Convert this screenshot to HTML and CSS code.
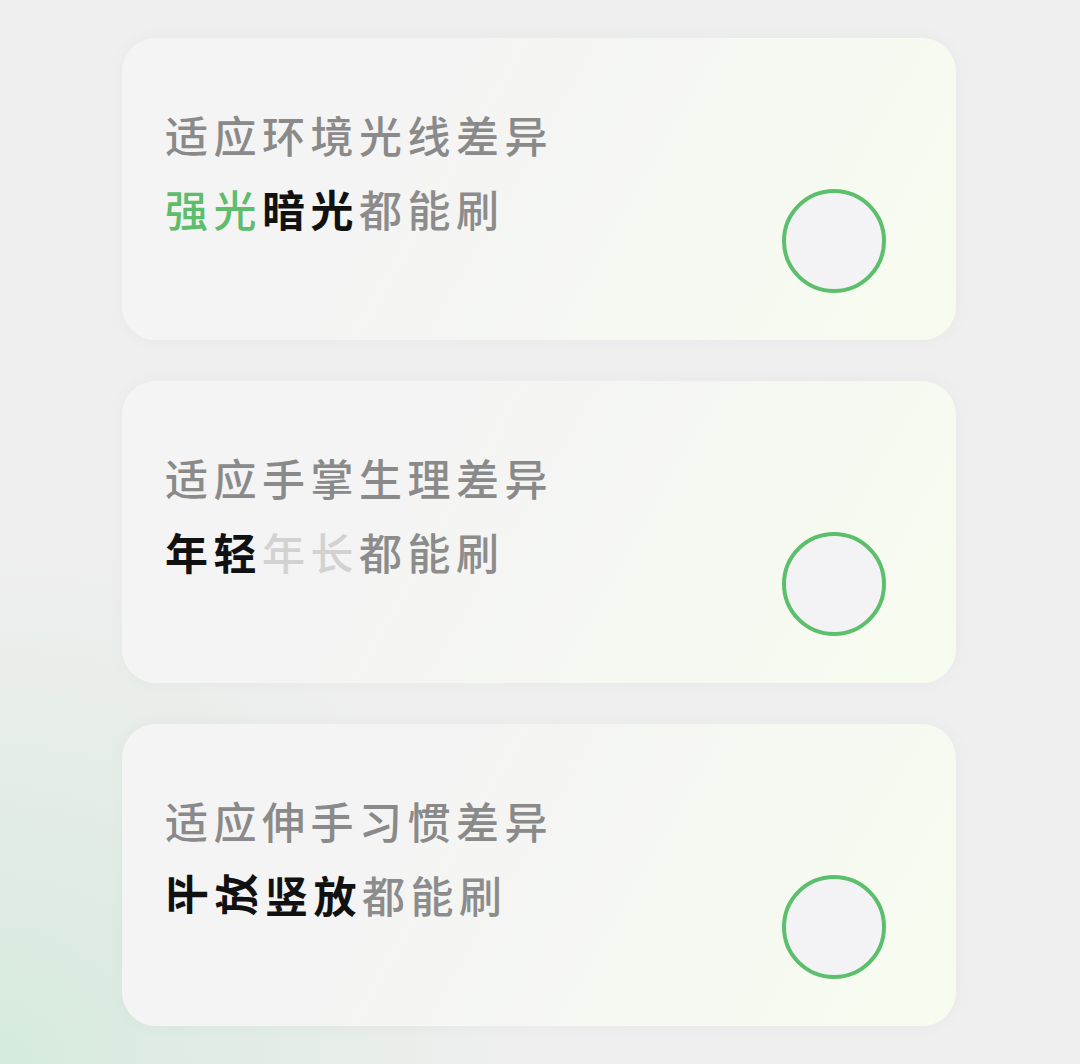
FILE: index.html
```html
<!DOCTYPE html>
<html lang="zh-CN">
<head>
    <meta charset="UTF-8">
    <title>刷掌适应</title>
    <link rel="stylesheet" href="styles.css">
</head>
<body>
 <main class="list">

    <div class="card">
        <div class="text">
            <p class="title">适应环境光线差异</p>
            <p class="line"><span class="green">强光</span><span class="black">暗光</span><span class="gray">都能刷</span></p>
        </div>
        <div class="ring"></div>
    </div>

    <div class="card">
        <div class="text">
            <p class="title">适应手掌生理差异</p>
            <p class="line"><span class="black">年轻</span><span class="light">年长</span><span class="gray">都能刷</span></p>
        </div>
        <div class="ring"></div>
    </div>

    <div class="card">
        <div class="text">
            <p class="title">适应伸手习惯差异</p>
            <p class="line"><span class="black"><span class="turn">平</span><span class="turn">放</span>竖放</span><span class="gray">都能刷</span></p>
        </div>
        <div class="ring"></div>
    </div>

 </main>
</body>
</html>
```

FILE: styles.css
```css
*{
    margin: 0;
    padding: 0;
    box-sizing: border-box;
}

body{
    width: 1080px;
    height: 1064px;
    overflow: hidden;
    background-color: #efefef;
    background-image: radial-gradient(ellipse 520px 520px at 0 1064px, rgba(214, 234, 221, 1), rgba(239, 239, 239, 0));
    font-family: "Noto Sans CJK SC", "Noto Sans", sans-serif;
}

.list{
    display: flex;
    flex-direction: column;
    gap: 41px;
    padding: 38px 0 0 122px;
}

.card{
    width: 834px;
    height: 302px;
    border-radius: 34px;
    background: linear-gradient(120deg, #f4f4f4 35%, #f7fcef 100%);
    box-shadow: 0 0 18px rgba(0, 0, 0, 0.035);
    display: flex;
    justify-content: space-between;
    align-items: flex-end;
    padding: 59px 70px 47px 43px;
}

.text{
    align-self: flex-start;
}

.title, .line{
    font-size: 43px;
    line-height: 74px;
    letter-spacing: 5.5px;
    font-weight: 500;
}

.title{
    color: #8a8a8a;
}

.green{
    color: #5dbd6b;
}

.black{
    color: #111;
    font-weight: 700;
}

.light{
    color: #d2d2d2;
}

.gray{
    color: #8c8c8c;
}

.turn{
    display: inline-block;
    width: 1em;
    line-height: 1em;
    letter-spacing: 0;
    margin-right: 7px;
    transform: translateX(-2px) rotate(-90deg);
}

.ring{
    width: 104px;
    height: 104px;
    border-radius: 50%;
    border: 4px solid #5bbf6c;
    background: #f3f3f5;
}
```
